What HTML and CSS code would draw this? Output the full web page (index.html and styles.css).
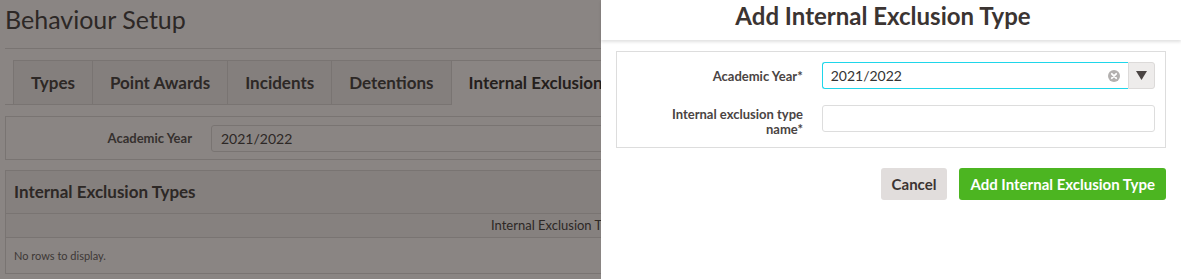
FILE: index.html
```html
<!DOCTYPE html>
<html lang="en">
<head>
    <meta charset="UTF-8">
    <meta name="viewport" content="width=device-width, initial-scale=1.0">
    <title>Behaviour Setup</title>
    <link rel="stylesheet" href="styles.css">
</head>
<body>
    <div class="page">
        <h1 class="page-title">Behaviour Setup</h1>
        <div class="tabs">
            <a class="tab">Types</a>
            <a class="tab">Point Awards</a>
            <a class="tab">Incidents</a>
            <a class="tab">Detentions</a>
            <a class="tab active">Internal Exclusions</a>
        </div>
        <div class="filter">
            <label class="filter-label">Academic Year</label>
            <div class="filter-input">2021/2022</div>
        </div>
        <div class="section">
            <div class="section-head">Internal Exclusion Types</div>
            <div class="grid-head">Internal Exclusion Type</div>
            <div class="grid-empty">No rows to display.</div>
        </div>
    </div>

    <div class="backdrop"></div>

    <div class="drawer">
        <div class="drawer-head">
            <h2>Add Internal Exclusion Type</h2>
        </div>
        <div class="drawer-body">
            <div class="form-box">
                <div class="form-row">
                    <label class="form-label">Academic Year*</label>
                    <div class="select focused">
                        <span class="select-value">2021/2022</span>
                        <span class="select-clear">
                            <svg width="12" height="12" viewBox="0 0 12 12">
                                <circle cx="6" cy="6" r="6" fill="#b3b0af"/>
                                <path d="M3.8 3.8 L8.2 8.2 M8.2 3.8 L3.8 8.2" stroke="#fff" stroke-width="1.8" stroke-linecap="round"/>
                            </svg>
                        </span>
                        <span class="select-arrow">
                            <svg width="11" height="9" viewBox="0 0 11 9">
                                <path d="M0 0 H11 L5.5 9 Z" fill="#4a4443"/>
                            </svg>
                        </span>
                    </div>
                </div>
                <div class="form-row">
                    <label class="form-label two-line">Internal exclusion type name*</label>
                    <input class="text-input" type="text">
                </div>
            </div>
            <div class="actions">
                <button class="btn btn-cancel">Cancel</button>
                <button class="btn btn-add">Add Internal Exclusion Type</button>
            </div>
        </div>
    </div>
</body>
</html>
```

FILE: styles.css
```css
body {
    margin: 0;
    width: 1181px;
    height: 279px;
    overflow: hidden;
    font-family: "Lato", "Open Sans", sans-serif;
    color: #333;
    background: #fff;
}

/* page behind the drawer */
.page {
    padding: 0 0 0 5px;
    width: 1176px;
    overflow: hidden;
}
.page-title {
    margin: 0;
    padding: 4px 0 0 0;
    height: 44px;
    font-size: 25px;
    font-weight: 400;
    color: #444;
    border-bottom: 1px solid #ddd;
}
.tabs {
    display: flex;
    margin-top: 11px;
    padding-left: 8px;
    border-bottom: 1px solid #ddd;
    height: 44px;
}
.tab {
    padding: 0 17px;
    line-height: 44px;
    font-size: 17px;
    font-weight: 700;
    color: #444;
    background: #f3f3f3;
    border: 1px solid #ddd;
    border-bottom: none;
    border-left: none;
    white-space: nowrap;
}
.tab:first-child {
    border-left: 1px solid #ddd;
}
.tab.active {
    background: #fff;
    height: 45px;
    color: #333;
}
.filter {
    display: flex;
    align-items: center;
    margin-top: 11px;
    height: 42px;
    border: 1px solid #ddd;
}
.filter-label {
    width: 186px;
    text-align: right;
    font-size: 13px;
    font-weight: 700;
    color: #555;
}
.filter-input {
    margin-left: 19px;
    flex: 1;
    height: 25px;
    line-height: 25px;
    padding-left: 9px;
    font-size: 14px;
    color: #444;
    border: 1px solid #ddd;
    border-radius: 3px;
}
.section {
    margin-top: 10px;
    border: 1px solid #ddd;
}
.section-head {
    height: 42px;
    line-height: 42px;
    padding-left: 8px;
    font-size: 17px;
    font-weight: 700;
    color: #444;
    background: #f5f5f5;
    border-bottom: 1px solid #ddd;
}
.grid-head {
    height: 23px;
    line-height: 23px;
    padding-left: 485px;
    font-size: 13px;
    color: #444;
    background: #f7f7f7;
    border-bottom: 1px solid #ddd;
    white-space: nowrap;
}
.grid-empty {
    height: 35px;
    line-height: 35px;
    padding-left: 8px;
    font-size: 11px;
    color: #666;
}

.backdrop {
    position: fixed;
    inset: 0;
    background: rgba(22, 12, 8, 0.5);
}

/* side drawer */
.drawer {
    position: fixed;
    top: 0;
    right: 0;
    bottom: 0;
    width: 580px;
    background: #fff;
}
.drawer-head {
    height: 40px;
    box-shadow: 0 2px 3px rgba(0, 0, 0, 0.12);
    text-align: center;
    padding-right: 16px;
}
.drawer-head h2 {
    margin: 0;
    line-height: 31px;
    font-size: 24px;
    font-weight: 700;
    color: #3b3432;
}
.drawer-body {
    padding: 11px 15px 0 15px;
}
.form-box {
    border: 1px solid #ddd;
    padding: 10px 10px 10px 0;
    display: flex;
    flex-direction: column;
    gap: 16px;
}
.form-row {
    display: flex;
    align-items: flex-start;
}
.form-label {
    width: 150px;
    padding: 7px 0 0 36px;
    margin-right: 19px;
    text-align: right;
    font-size: 13px;
    font-weight: 700;
    line-height: 15px;
    color: #4a4443;
}
.form-label.two-line {
    padding-top: 2px;
}
.select {
    display: flex;
    align-items: center;
    width: 334px;
    height: 27px;
}
.select-value {
    flex: 1;
    display: flex;
    align-items: center;
    height: 25px;
    padding-left: 8px;
    font-size: 14px;
    color: #333;
    border: 1px solid #1fd6ea;
    border-right: none;
    border-radius: 3px 0 0 3px;
}
.select-clear {
    display: flex;
    align-items: center;
    height: 25px;
    padding-right: 8px;
    border-top: 1px solid #1fd6ea;
    border-bottom: 1px solid #1fd6ea;
}
.select-arrow {
    display: flex;
    align-items: center;
    justify-content: center;
    width: 25px;
    height: 25px;
    background: #eeeceb;
    border: 1px solid #dcdad9;
    border-radius: 0 3px 3px 0;
}
.text-input {
    width: 333px;
    height: 27px;
    box-sizing: border-box;
    margin: 0;
    border: 1px solid #ddd;
    border-radius: 3px;
    outline: none;
}
.actions {
    display: flex;
    justify-content: flex-end;
    gap: 12px;
    margin-top: 20px;
}
.btn {
    height: 32px;
    padding: 0 11px;
    border: none;
    border-radius: 3px;
    font-family: inherit;
    font-size: 15px;
    font-weight: 700;
    cursor: pointer;
}
.btn-cancel {
    background: #e1dddc;
    color: #3b3432;
}
.btn-add {
    background: #4cb521;
    color: #fff;
}
```
